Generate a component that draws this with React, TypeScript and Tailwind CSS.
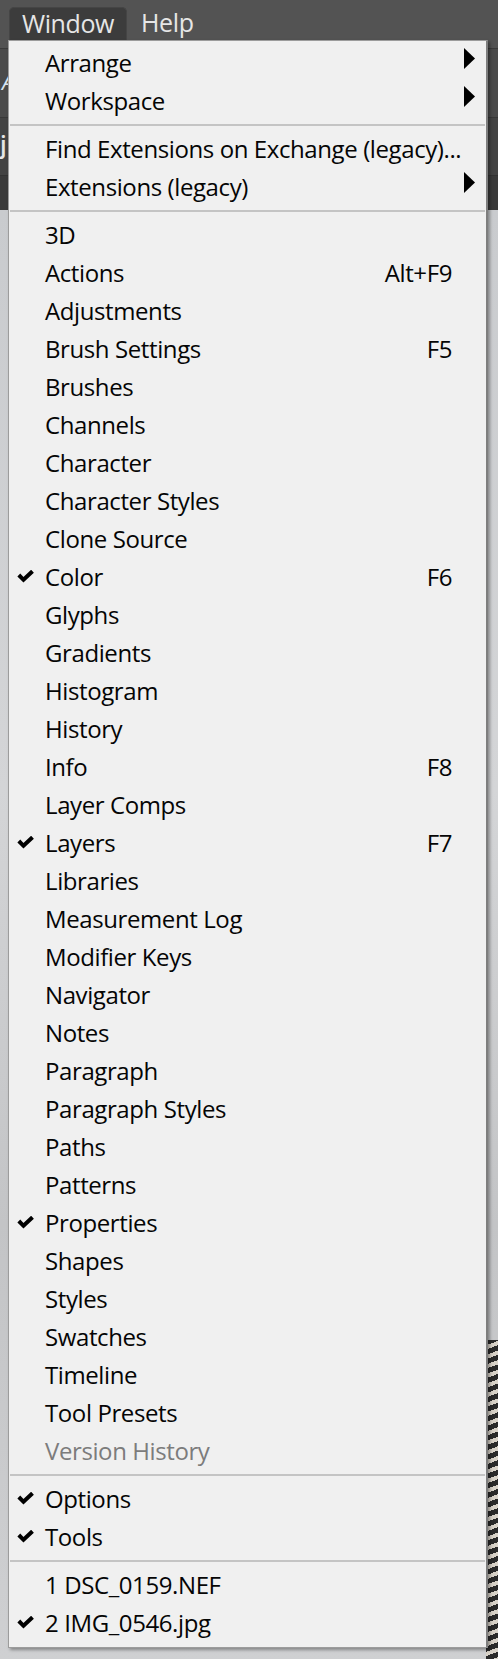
import React from "react";

type Item = {
  label: string;
  shortcut?: string;
  checked?: boolean;
  submenu?: boolean;
  disabled?: boolean;
};

// groups are split by separators
const GROUPS: Item[][] = [
  [
    { label: "Arrange", submenu: true },
    { label: "Workspace", submenu: true },
  ],
  [
    { label: "Find Extensions on Exchange (legacy)..." },
    { label: "Extensions (legacy)", submenu: true },
  ],
  [
    { label: "3D" },
    { label: "Actions", shortcut: "Alt+F9" },
    { label: "Adjustments" },
    { label: "Brush Settings", shortcut: "F5" },
    { label: "Brushes" },
    { label: "Channels" },
    { label: "Character" },
    { label: "Character Styles" },
    { label: "Clone Source" },
    { label: "Color", shortcut: "F6", checked: true },
    { label: "Glyphs" },
    { label: "Gradients" },
    { label: "Histogram" },
    { label: "History" },
    { label: "Info", shortcut: "F8" },
    { label: "Layer Comps" },
    { label: "Layers", shortcut: "F7", checked: true },
    { label: "Libraries" },
    { label: "Measurement Log" },
    { label: "Modifier Keys" },
    { label: "Navigator" },
    { label: "Notes" },
    { label: "Paragraph" },
    { label: "Paragraph Styles" },
    { label: "Paths" },
    { label: "Patterns" },
    { label: "Properties", checked: true },
    { label: "Shapes" },
    { label: "Styles" },
    { label: "Swatches" },
    { label: "Timeline" },
    { label: "Tool Presets" },
    { label: "Version History", disabled: true },
  ],
  [
    { label: "Options", checked: true },
    { label: "Tools", checked: true },
  ],
  [
    { label: "1 DSC_0159.NEF" },
    { label: "2 IMG_0546.jpg", checked: true },
  ],
];

const Check = () => (
  <svg width="17" height="13" viewBox="0 0 17 13" className="block">
    <polyline
      points="1.8,5 6.5,9.8 15.5,1.2"
      fill="none"
      stroke="#000"
      strokeWidth="4"
      strokeLinejoin="miter"
    />
  </svg>
);

const Arrow = () => (
  <svg width="11" height="21" viewBox="0 0 11 21" className="block">
    <polygon points="0,0 11,10.5 0,21" fill="#000" />
  </svg>
);

const MenuRow: React.FC<{ item: Item }> = ({ item }) => (
  <div className="flex items-start h-[38px]">
    <div className="w-[36px] pl-[8px] pt-[12px] shrink-0">
      {item.checked && <Check />}
    </div>
    <div
      className={`flex-1 leading-[38px] whitespace-nowrap ${item.disabled ? "text-[#7c7c7c]" : "text-[#050505]"}`}
    >
      {item.label}
    </div>
    {item.shortcut && (
      <div className="leading-[38px] mr-[34px] text-[#050505]">
        {item.shortcut}
      </div>
    )}
    {item.submenu && (
      <div className="mt-[4px] mr-[11px]">
        <Arrow />
      </div>
    )}
  </div>
);

export default function App() {
  return (
    <div className="relative w-[498px] h-[1659px] overflow-hidden flex flex-col bg-[#c8cacd] font-['Open_Sans',sans-serif] text-[24px] tracking-[-0.4px]">
      {/* menu bar */}
      <div className="h-[48px] bg-[#535353] flex items-start pl-[9px] pt-[7px] shrink-0">
        <div className="h-[33px] px-[12px] bg-[#3c3c3c] rounded-t-[5px] border border-b-0 border-[#454545] text-[#e6e6e6] leading-[31px] text-[25px]">
          Window
        </div>
        <div className="h-[33px] px-[14px] text-[#e6e6e6] leading-[31px] text-[25px]">
          Help
        </div>
      </div>

      {/* app chrome behind the menu */}
      <div className="h-[69px] bg-[#4a4a4a] border-t border-[#3b3b3b] shrink-0 relative">
        <span className="absolute left-[2px] top-[16px] text-[22px] italic text-[#d8e4f0]">
          A
        </span>
      </div>
      <div className="h-[58px] bg-[#434343] border-t border-[#383838] shrink-0 relative">
        <span className="absolute left-[0px] top-[8px] text-[24px] font-semibold text-[#e6e6e6]">
          j
        </span>
      </div>
      <div className="h-[35px] bg-[#3a3a3a] border-t border-[#333] shrink-0" />

      {/* canvas */}
      <div className="flex-1 bg-[linear-gradient(180deg,#c9cbce_0%,#d4d5d7_40%,#c3c4c6_70%,#cfd0d2_100%)] relative">
        <div className="absolute right-0 top-[1130px] w-[12px] h-[320px] bg-[repeating-linear-gradient(160deg,#2a2a2a_0px,#2a2a2a_5px,#d8d2c8_5px,#d8d2c8_9px)]" />
      </div>

      {/* dropdown */}
      <div className="absolute left-[8px] top-[40px] w-[480px] bg-[#f0f0f0] border border-[#9c9c9c] border-r-[2px] border-r-[#7e7e7e] shadow-[2px_2px_3px_rgba(0,0,0,0.35)] pt-[3px] pb-[5px]">
        {GROUPS.map((group, gi) => (
          <div key={gi}>
            {gi > 0 && (
              <div className="h-[10px] flex items-center px-[1px]">
                <div className="h-[2px] w-full bg-[#c4c4c4]" />
              </div>
            )}
            {group.map((item) => (
              <MenuRow key={item.label} item={item} />
            ))}
          </div>
        ))}
      </div>
    </div>
  );
}
